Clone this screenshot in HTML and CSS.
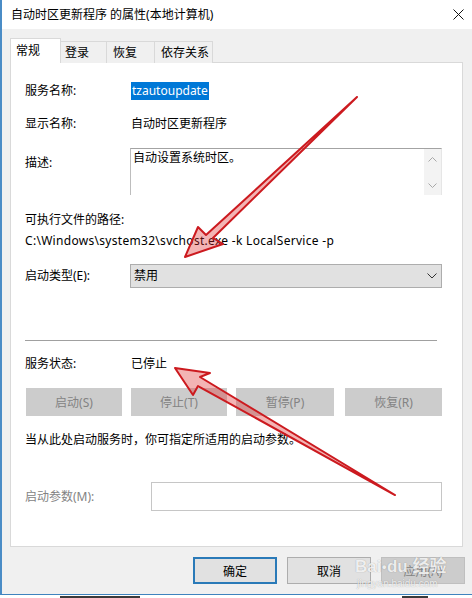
FILE: index.html
```html
<!DOCTYPE html>
<html lang="zh-CN">
<head>
  <meta charset="UTF-8">
  <meta name="viewport" content="width=device-width, initial-scale=1.0">
  <title>自动时区更新程序 的属性(本地计算机)</title>

  <link rel="stylesheet" href="styles.css">
</head>
<body>
  <div class="window">
    <div class="titlebar">
      <span class="title">自动时区更新程序 的属性(本地计算机)</span>
      <svg class="close" width="11" height="11" viewBox="0 0 11 11">
        <path d="M0.5 0.5 L10.5 10.5 M10.5 0.5 L0.5 10.5" stroke="#111" stroke-width="1" fill="none"/>
      </svg>
    </div>

    <div class="content">
      <div class="tabs">
        <div class="tab active">常规</div>
        <div class="tab t-login">登录</div>
        <div class="tab t-recover">恢复</div>
        <div class="tab t-deps">依存关系</div>
      </div>

      <div class="panel">
        <div class="row r-name">
          <span class="label">服务名称:</span>
          <span class="value"><span class="selected">tzautoupdate</span></span>
        </div>

        <div class="row r-display">
          <span class="label">显示名称:</span>
          <span class="value">自动时区更新程序</span>
        </div>

        <div class="row r-desc">
          <span class="label">描述:</span>
          <div class="textbox">
            <div class="textbox-text">自动设置系统时区。</div>
            <div class="scrollbar">
              <svg width="9" height="5" viewBox="0 0 9 5"><path d="M0.5 4.5 L4.5 0.5 L8.5 4.5" stroke="#a8a8a8" fill="none"/></svg>
              <svg width="9" height="5" viewBox="0 0 9 5"><path d="M0.5 0.5 L4.5 4.5 L8.5 0.5" stroke="#a8a8a8" fill="none"/></svg>
            </div>
          </div>
        </div>

        <div class="line r-exe">可执行文件的路径:</div>
        <div class="line r-path">C:\Windows\system32\svchost.exe -k LocalService -p</div>

        <div class="row r-start">
          <span class="label">启动类型(E):</span>
          <div class="combo">
            <span>禁用</span>
            <svg width="10" height="6" viewBox="0 0 10 6"><path d="M0.5 0.5 L5 5 L9.5 0.5" stroke="#333" fill="none"/></svg>
          </div>
        </div>

        <div class="separator"></div>

        <div class="row r-status">
          <span class="label">服务状态:</span>
          <span class="value">已停止</span>
        </div>

        <div class="svc-buttons">
          <button class="btn disabled b-start">启动(S)</button>
          <button class="btn disabled b-stop">停止(T)</button>
          <button class="btn disabled b-pause">暂停(P)</button>
          <button class="btn disabled b-resume">恢复(R)</button>
        </div>

        <div class="line r-hint">当从此处启动服务时，你可指定所适用的启动参数。</div>

        <div class="row r-param">
          <span class="label muted">启动参数(M):</span>
          <div class="param-input"></div>
        </div>
      </div>

      <div class="footer">
        <button class="btn default">确定</button>
        <button class="btn">取消</button>
        <button class="btn disabled">应用(A)</button>
      </div>
    </div>
  </div>
  <!-- tops of the window underneath -->
  <div class="under"><i class="under-a"></i><i class="under-b"></i></div>

  <!-- red annotation arrows -->
  <svg class="arrows" width="472" height="598" viewBox="0 0 472 598">
    <path d="M357 97 L206 235 L198 227 L185 257 L223 244 L213 238 Z" />
    <path d="M395 495 L200 377 L210 373 L175 368 L193 395 L198 386 Z" />
  </svg>

  <div class="watermark">
    <div class="wm-top">Bai<span class="wm-paw">●</span>du 经验</div>
    <div class="wm-url">jingyan.baidu.com</div>
  </div>
</body>
</html>
```

FILE: styles.css
```css
* {
  margin: 0;
  padding: 0;
  box-sizing: border-box;
}

body {
  width: 472px;
  height: 598px;
  overflow: hidden;
  position: relative;
  background-color: #ffffff;
  font-family: 'Noto Sans', 'Noto Sans CJK SC', sans-serif;
  font-size: 12px;
  line-height: 18px;
  color: #000;
}

/* Window frame */
.window {
  height: 595px;
  background-color: #f0f0f0;
  border-left: 2px solid #4a8cc6;
  border-bottom: 1px solid #3f83be;
}

.titlebar {
  height: 29px;
  background-color: #ffffff;
  display: flex;
  justify-content: space-between;
  align-items: center;
  padding: 0 8px 0 9px;
}

.content {
  padding: 9px 9px 0 8px;
}

/* Tabs */
.tabs {
  display: flex;
  align-items: flex-end;
  height: 25px;
  margin-bottom: -1px;
  position: relative;
  z-index: 1;
}

.tab {
  height: 22px;
  padding: 2px 0 0 5px;
  border-top: 1px solid #d9d9d9;
  border-right: 1px solid #d9d9d9;
  background-color: #f0f0f0;
}

.tab.active {
  width: 51px;
  height: 25px;
  padding-top: 3px;
  border-left: 1px solid #d9d9d9;
  background-color: #ffffff;
}

.t-login { width: 46px; padding-left: 4px; }
.t-recover { width: 48px; padding-left: 6px; }
.t-deps { width: 58px; padding-left: 6px; }

/* Tab panel */
.panel {
  width: 453px;
  height: 485px;
  background-color: #ffffff;
  border: 1px solid #d9d9d9;
  padding: 0 20px 0 14px;
}

.row {
  display: grid;
  grid-template-columns: 105px 312px;
  align-items: center;
}

.value {
  padding-left: 1px;
}

.selected {
  display: inline-block;
  background-color: #0078d7;
  color: #fff;
  padding: 0 1px;
}

.r-name { margin-top: 19px; }
.r-display { margin-top: 15px; }

.r-desc {
  margin-top: 15px;
  align-items: start;
}

.r-desc .label {
  padding-top: 6px;
}

.textbox {
  height: 47px;
  display: flex;
  border-top: 1px solid #a3a3a3;
  border-left: 1px solid #bdbdbd;
  border-right: 1px solid #e6e6e6;
}

.textbox-text {
  flex: 1;
  padding: 0 2px;
}

.scrollbar {
  width: 17px;
  background-color: #f3f3f3;
  display: flex;
  flex-direction: column;
  align-items: center;
  justify-content: space-between;
  padding: 8px 0 7px;
}

.r-exe { margin-top: 16px; }
.r-path { margin-top: 3px; letter-spacing: 0.3px; }

/* Combo box */
.r-start { margin-top: 14px; }

.combo {
  height: 24px;
  background-color: #e1e1e1;
  border: 1px solid #adadad;
  display: flex;
  justify-content: space-between;
  align-items: center;
  padding: 0 4px 0 3px;
}

.separator {
  width: 412px;
  height: 1px;
  margin-top: 52px;
  background-color: #a0a0a0;
}

.r-status { margin-top: 14px; }

/* Buttons */
.btn {
  font-family: inherit;
  font-size: 12px;
  height: 27px;
  width: 84px;
  border: 1px solid #adadad;
  background-color: #e1e1e1;
  color: #000;
}

.btn.disabled {
  background-color: #cccccc;
  border-color: #bfbfbf;
  color: #838383;
}

.svc-buttons {
  display: flex;
  margin: 15px 0 0 1px;
}

.svc-buttons .btn {
  height: 28px;
  border-color: #cccccc;
}

.b-start { width: 96px; }
.b-stop { width: 96px; margin-left: 9px; }
.b-pause { width: 98px; margin-left: 9px; }
.b-resume { width: 97px; margin-left: 11px; }

.r-hint { margin-top: 15px; }

.r-param {
  margin-top: 33px;
  grid-template-columns: 126px 291px;
}

.muted {
  color: #838383;
}

.param-input {
  height: 29px;
  border: 1px solid #c6c6c6;
}

/* Dialog buttons */
.footer {
  display: flex;
  justify-content: flex-end;
  gap: 10px;
  margin: 10px -2px 0 0;
}

.btn.default {
  border: 2px solid #2a7ab8;
}

/* Window below this one */
.under {
  height: 3px;
  display: flex;
  align-items: flex-end;
}

.under i {
  display: block;
  height: 2px;
  background-color: #3a3a3a;
}

.under-a {
  width: 80px;
  margin-left: 60px;
}

.under-b {
  width: 26px;
  margin-left: 262px;
}

/* Overlays */
.arrows {
  position: absolute;
  left: 0;
  top: 0;
  pointer-events: none;
}

.arrows path {
  fill: rgba(220, 40, 40, 0.35);
  stroke: #cc1a1f;
  stroke-width: 2;
  stroke-linejoin: round;
}

.watermark {
  position: absolute;
  left: 355px;
  top: 556px;
  color: rgba(255, 255, 255, 0.85);
  text-shadow: 0 0 1px rgba(0, 0, 0, 0.35);
  pointer-events: none;
}

.wm-top {
  font-family: 'Liberation Sans', 'Noto Sans CJK SC', sans-serif;
  font-size: 17px;
  line-height: 22px;
  font-weight: bold;
}

.wm-paw {
  font-size: 9px;
  vertical-align: top;
}

.wm-url {
  font-family: 'Liberation Sans', sans-serif;
  font-size: 10px;
  line-height: 12px;
  padding-left: 2px;
}
```
